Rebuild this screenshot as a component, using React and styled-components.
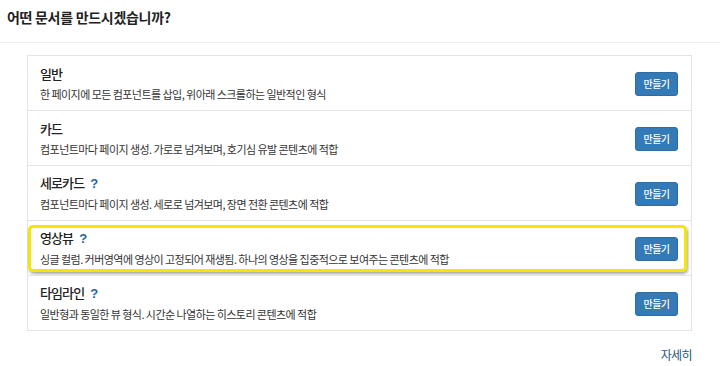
import React from 'react'
import styled, { createGlobalStyle } from 'styled-components'

const GlobalStyle = createGlobalStyle`
    body {
        margin: 0;
        background: #fff;
        font-family: "Noto Sans CJK KR", "Noto Sans", sans-serif;
        color: #333;
    }
`;

const docTypes = [
    { title: '일반', desc: '한 페이지에 모든 컴포넌트를 삽입, 위아래 스크롤하는 일반적인 형식' },
    { title: '카드', desc: '컴포넌트마다 페이지 생성. 가로로 넘겨보며, 호기심 유발 콘텐츠에 적합' },
    { title: '세로카드', desc: '컴포넌트마다 페이지 생성. 세로로 넘겨보며, 장면 전환 콘텐츠에 적합', help: true },
    { title: '영상뷰', desc: '싱글 컬럼. 커버영역에 영상이 고정되어 재생됨. 하나의 영상을 집중적으로 보여주는 콘텐츠에 적합', help: true, highlight: true },
    { title: '타임라인', desc: '일반형과 동일한 뷰 형식. 시간순 나열하는 히스토리 콘텐츠에 적합', help: true },
];

function App() {
    return (
        <Page>
            <GlobalStyle />
            <Header>
                <h1>어떤 문서를 만드시겠습니까?</h1>
            </Header>
            <TypeList>
                {docTypes.map((t, i) => (
                    <TypeRow key={i} $highlight={t.highlight}>
                        <div className="info">
                            <div className="title">
                                {t.title}
                                {t.help && <span className="help">?</span>}
                            </div>
                            <div className="desc">{t.desc}</div>
                        </div>
                        <CreateButton>만들기</CreateButton>
                    </TypeRow>
                ))}
            </TypeList>
            <Footer>
                <a href="#">자세히</a>
            </Footer>
        </Page>
    )
}

const Page = styled.div`
    width: 720px;
    height: 366px;
    overflow: hidden;
`;

const Header = styled.div`
    height: 43px;
    border-bottom: 1px solid #ececec;
    display: flex;
    align-items: center;
    padding: 0 7px;
    box-sizing: border-box;
    margin-bottom: 12px;

    h1 {
        margin: 0 0 9px;
        font-size: 14px;
        font-weight: 700;
        letter-spacing: -0.3px;
        color: #222;
    }
`;

const TypeList = styled.div`
    margin: 0 28px 0 27px;
    border: 1px solid #e4e4e4;
`;

const TypeRow = styled.div`
    position: relative;
    height: 54px;
    padding: 0 13px 0 12px;
    display: flex;
    align-items: center;
    justify-content: space-between;

    & + & {
        border-top: 1px solid #e4e4e4;
    }

    .info {
        display: flex;
        flex-direction: column;
        margin-top: -1px;
    }

    .title {
        font-size: 13px;
        font-weight: 500;
        color: #222;
        letter-spacing: -0.9px;
        line-height: 18px;
    }

    .help {
        margin-left: 6px;
        color: #1d65a6;
        font-weight: 700;
        font-family: "Liberation Sans", sans-serif;
        letter-spacing: 0;
    }

    .desc {
        margin-top: 4px;
        font-size: 11px;
        letter-spacing: -0.55px;
        color: #333;
        line-height: 14px;
    }

    &::after {
        content: '';
        display: ${p => (p.$highlight ? 'block' : 'none')};
        position: absolute;
        top: 4px;
        bottom: 3px;
        left: 0;
        right: 4px;
        border: 3px solid #f3e600;
        border-radius: 5px;
        box-shadow: 1px 2px 3px rgba(0, 0, 0, 0.35);
        pointer-events: none;
    }
`;

const CreateButton = styled.button`
    width: 43px;
    height: 24px;
    padding: 0;
    margin-top: 1px;
    background: #337ab7;
    border: 1px solid #2e6da4;
    border-radius: 3px;
    color: #fff;
    font-family: "Noto Sans CJK KR", sans-serif;
    font-size: 10px;
    font-weight: 500;
    letter-spacing: -0.5px;
    cursor: pointer;
`;

const Footer = styled.div`
    margin: 10px 28px 0 0;
    text-align: right;

    a {
        font-size: 12px;
        letter-spacing: -0.6px;
        color: #23527c;
        text-decoration: none;
    }
`;

export default App
